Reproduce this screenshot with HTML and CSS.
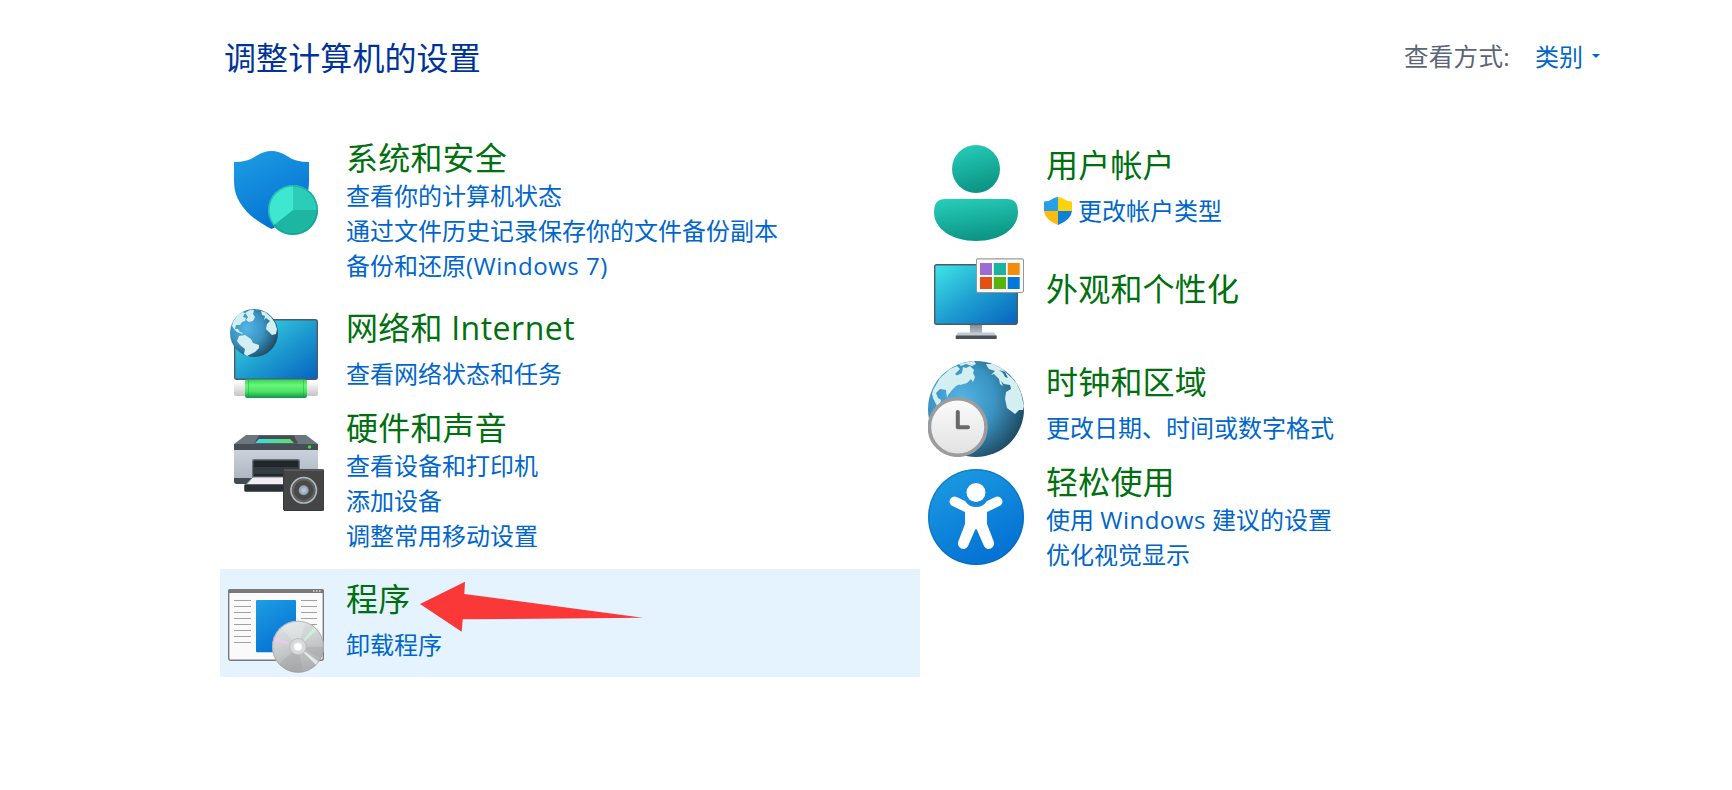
FILE: index.html
```html
<!DOCTYPE html>
<html lang="zh-CN">
<head>
  <meta charset="UTF-8" />
  <title>控制面板</title>
  <link rel="stylesheet" href="styles.css">
</head>
<body>
  <!-- shared gradients -->
  <svg class="defs" width="0" height="0">
    <defs>
      <linearGradient id="blue" x1="0" y1="0" x2="0.5" y2="1"><stop offset="0" stop-color="#1f9ee3"/><stop offset="1" stop-color="#0473d4"/></linearGradient>
      <linearGradient id="screen" x1="0" y1="0" x2="1" y2="1"><stop offset="0" stop-color="#40e6e8"/><stop offset="0.5" stop-color="#1f9fd0"/><stop offset="1" stop-color="#0563c0"/></linearGradient>
      <linearGradient id="teal" x1="0" y1="0" x2="0.3" y2="1"><stop offset="0" stop-color="#27d0bc"/><stop offset="1" stop-color="#0d9686"/></linearGradient>
      <radialGradient id="ocean" cx="0.35" cy="0.4" r="0.7"><stop offset="0" stop-color="#55b4e4"/><stop offset="0.5" stop-color="#3a93c2"/><stop offset="1" stop-color="#1c465d"/></radialGradient>
      <linearGradient id="silver" x1="0" y1="0" x2="0" y2="1"><stop offset="0" stop-color="#fdfdfd"/><stop offset="1" stop-color="#c4c4c4"/></linearGradient>
      <linearGradient id="green" x1="0" y1="0" x2="0" y2="1"><stop offset="0" stop-color="#38d355"/><stop offset="0.3" stop-color="#68f57a"/><stop offset="0.65" stop-color="#4be465"/><stop offset="1" stop-color="#139345"/></linearGradient>
      <linearGradient id="body" x1="0" y1="0" x2="0" y2="1"><stop offset="0" stop-color="#cbd2dc"/><stop offset="1" stop-color="#a8b1bd"/></linearGradient>
      <linearGradient id="glass" x1="0" y1="0" x2="1" y2="0"><stop offset="0" stop-color="#3cd9ed"/><stop offset="1" stop-color="#5ce05a"/></linearGradient>
      <linearGradient id="disc" x1="0" y1="0" x2="0.3" y2="1"><stop offset="0" stop-color="#e4e8e8"/><stop offset="0.5" stop-color="#cdd0d1"/><stop offset="1" stop-color="#aeb0b1"/></linearGradient>
      <radialGradient id="cone"><stop offset="0" stop-color="#c5d0db"/><stop offset="1" stop-color="#8d99a6"/></radialGradient>
    </defs>
  </svg>

  <div class="header">
    <h1>调整计算机的设置</h1>
    <div class="view">
      <span class="view-label">查看方式:</span>
      <a class="view-value">类别</a>
      <span class="caret"></span>
    </div>
  </div>

  <div class="columns">
    <div class="column">
      <div class="category tall">
        <svg class="icon" viewBox="0 0 96 96">
          <path fill="url(#blue)" d="M6 17Q20 17 28 11Q36 6 43.500 6Q51 6 59 11Q67 17 81 17V37C81 60 64 75 43.500 84C23 74 6 58 6 37Z"/>
          <circle cx="65" cy="65" r="25" fill="#3de7d0"/>
          <path fill="#2bcdb8" d="M65 65V40A25 25 0 0 1 90 65Z"/>
          <path fill="#1db6a3" d="M65 65H90A25 25 0 0 1 45.500 80.500Z"/>
          <circle cx="65" cy="65" r="24.200" fill="none" stroke="#138e83" stroke-opacity=".45" stroke-width="1.600"/>
        </svg>
        <div class="text">
          <a class="title">系统和安全</a>
          <a class="link">查看你的计算机状态</a>
          <a class="link">通过文件历史记录保存你的文件备份副本</a>
          <a class="link">备份和还原<span class="en">(Windows 7)</span></a>
        </div>
      </div>

      <div class="category network">
        <svg class="icon" viewBox="0 0 96 96">
          <rect x="6.700" y="10.700" width="82.600" height="59.600" rx="2" fill="url(#screen)" stroke="#4d5b66" stroke-width="1.400"/>
          <rect x="6" y="73" width="84" height="14" rx="2" fill="url(#silver)"/>
          <rect x="17" y="70.500" width="62" height="18.500" rx="2" fill="url(#green)"/>
          <path stroke="#128f3d" stroke-opacity=".35" d="M20.500 71V88M75.500 71V88"/>
          <circle cx="26" cy="24" r="24" fill="url(#ocean)"/>
          <path fill="#d3eff1" d="M5 13L9 7L14 3L17 4L15 8L18 9L17 12L14 13L12 16L8 16L7 20L10 20L12 23L15 24L14 25L9 23L6 20L4 17ZM17 4L22 1L26 1L25 5L27 8L25 12L21 13L18 11L20 8ZM11 27L17 26L23 30L25 34L31 36L31 39L27 43L23 45L19 47L16 45L17 40L12 36L9 32ZM33 2L37 3L43 8L47 14L49 20L48 25L44 26L41 23L38 20L39 15L42 12L38 9L36 11L37 7L34 6Z"/>
        </svg>
        <div class="text">
          <a class="title">网络和 <span class="en">Internet</span></a>
          <a class="link">查看网络状态和任务</a>
        </div>
      </div>

      <div class="category tall">
        <svg class="icon" viewBox="0 0 96 96">
          <path fill="url(#body)" d="M6 34H90V66Q90 69 87 69H9Q6 69 6 66Z"/>
          <path fill="#454b53" d="M6 63H25V69H9Q6 69 6 66Z"/>
          <path fill="#6d757e" d="M18 20H78L90 29H6Z"/>
          <path fill="#464d55" d="M6 29H90V35H6ZM31 20.500H66L70 28.500H26Z"/>
          <path fill="url(#glass)" d="M31 24H62L66 28H27Z"/>
          <circle cx="81.500" cy="32" r="1.700" fill="#22f02f"/>
          <rect x="24.700" y="44.700" width="46.600" height="20" rx="1.500" fill="#202629" stroke="#6a7179" stroke-width="1.400"/>
          <path fill="#353c41" d="M26 52H71V59H26Z"/>
          <path fill="#f1edf2" stroke="#777f86" d="M25 62H60V69.500H18Z"/>
          <rect x="16.500" y="69.500" width="42" height="7" rx="1" fill="#292f33" stroke="#59616a"/>
          <rect x="55.500" y="54.500" width="40.500" height="41" rx="1.500" fill="#454545" stroke="#35393e"/>
          <path stroke="#6a7179" d="M56 55H95.500"/>
          <circle cx="75.700" cy="75.300" r="12.700" fill="#494949" stroke="#adbbc4" stroke-width="1.700"/>
          <circle cx="75.700" cy="75.300" r="10.700" fill="none" stroke="#656565" stroke-width="1.500"/>
          <circle cx="75.700" cy="75.300" r="5" fill="url(#cone)"/>
        </svg>
        <div class="text">
          <a class="title">硬件和声音</a>
          <a class="link">查看设备和打印机</a>
          <a class="link">添加设备</a>
          <a class="link">调整常用移动设置</a>
        </div>
      </div>

      <div class="category active">
        <svg class="icon" viewBox="0 0 96 96">
          <rect x=".7" y="10.700" width="94.600" height="70.600" rx="2" fill="#fafafa" stroke="#797979" stroke-width="1.400"/>
          <path fill="#797979" d="M0 14V12Q0 10 2 10H94Q96 10 96 12V14Z"/>
          <path stroke="#ddd" stroke-dasharray="1.500 1.500" stroke-width="1.500" d="M85 12H93"/>
          <path stroke="#a2a2a2" d="M6 21.500H23M6 27.500H23M6 33.500H23M6 39.500H23M6 45.500H23M6 51.500H23M6 57.500H23M6 63.500H23M73 21.500H89M73 27.500H89M73 33.500H89M73 39.500H89M73 45.500H89"/>
          <rect x="28" y="21" width="40" height="52.300" rx="1" fill="url(#blue)"/>
          <circle cx="70" cy="67.700" r="26" fill="url(#disc)"/>
          <path fill="#eef0f0" opacity=".35" d="M70 67.700L53 48A26 26 0 0 1 78 43Z"/>
          <path fill="#f4f4f4" opacity=".8" d="M70 67.700L88 86L91 83Z"/>
          <path fill="#999" opacity=".3" d="M70 67.700L96 67.700A26 26 0 0 1 93 79ZM70 67.700L51 85A26 26 0 0 0 75 93Z"/>
          <path fill="#f2c5ef" d="M70 67.700L46 57.500L45 61.500Z"/>
          <path fill="#c9f0d8" d="M70 67.700L86 48L89 51Z"/>
          <circle cx="70" cy="67.700" r="25.500" fill="none" stroke="#9c9f9f" stroke-opacity=".65"/>
          <circle cx="70" cy="67.700" r="8.300" fill="#d7dada" stroke="#aeb1b1" stroke-width=".7"/>
          <circle cx="70" cy="67.700" r="4" fill="#fff" stroke="#eceeee"/>
        </svg>
        <div class="text">
          <a class="title">程序</a>
          <a class="link">卸载程序</a>
        </div>
        <svg class="pointer" viewBox="0 0 224 52">
          <path fill="#fb3838" d="M0 23L45 .7L44.300 13L223 36.700L42.700 38.300L41.700 50.700Z"/>
        </svg>
      </div>
    </div>

    <div class="column">
      <div class="category">
        <svg class="icon" viewBox="0 0 96 96">
          <circle cx="48" cy="24" r="24" fill="url(#teal)"/>
          <path fill="url(#teal)" d="M17 54H79Q90 54 90 67C90 84 72 96 48 96S6 84 6 67Q6 54 17 54Z"/>
        </svg>
        <div class="text">
          <a class="title">用户帐户</a>
          <a class="link with-shield">
            <svg class="shield" viewBox="0 0 28 28">
              <path fill="#27a0e6" d="M14 0Q10 0 7.500 2.500Q5 4.500 0 4.500V14H14Z"/>
              <path fill="#ffd10a" d="M14 0Q18 0 20.500 2.500Q23 4.500 28 4.500V14H14Z"/>
              <path fill="#fdbc0b" d="M0 14H14V28Q1 23 0 14Z"/>
              <path fill="#0f80d8" d="M28 14H14V28Q27 23 28 14Z"/>
            </svg>更改帐户类型</a>
        </div>
      </div>

      <div class="category single">
        <svg class="icon" viewBox="0 0 96 96">
          <linearGradient id="neck" x1="0" y1="0" x2="0" y2="1"><stop offset="0" stop-color="#7f8b95"/><stop offset="1" stop-color="#b3bdc6"/></linearGradient>
          <rect x="42" y="73" width="12" height="8" fill="url(#neck)"/>
          <path fill="#c1cad2" d="M30 80.500H66L68.700 84H27.700Z"/>
          <rect x="27.700" y="83.500" width="41" height="3.500" rx=".5" fill="#4b5157"/>
          <rect x="6.700" y="12.700" width="82.600" height="59.600" rx="2" fill="url(#screen)" stroke="#4d5b66" stroke-width="1.400"/>
          <rect x="48.500" y="6.500" width="47" height="34" rx="1.500" fill="#fafafa" stroke="#989898"/>
          <path stroke="#bdbdbd" stroke-width="1.500" d="M49 7H95"/>
          <rect x="52" y="11" width="12" height="12" fill="#9b6dd3"/>
          <rect x="65.800" y="11" width="12.200" height="12" fill="#1bb3a0"/>
          <rect x="79.700" y="11" width="12" height="12" fill="#f18c0c"/>
          <rect x="52" y="25" width="12" height="12" fill="#e25012"/>
          <rect x="65.800" y="25" width="12.200" height="12" fill="#56b40d"/>
          <rect x="79.700" y="25" width="12" height="12" fill="#0478d7"/>
        </svg>
        <div class="text">
          <a class="title">外观和个性化</a>
        </div>
      </div>

      <div class="category clock">
        <svg class="icon" viewBox="0 0 96 96">
          <circle cx="48" cy="48" r="48" fill="url(#ocean)"/>
          <path fill="#d3eff1" d="M5 29L12 17L22 8L29 5L32 8L27 13L31 16L29 19L34 22L28 25L24 29L20 34L19 37L18 29L12 28L8 32L10 37L13 39L12 43L9 45L5 37L4 33ZM28 15L34 12L35 6L38 7L42 5L46 9L45 12L47 16L45 21L43 18L39 22L32 24L27 21L30 18ZM31 3L40 1L46 0L48 3L44 5L38 3L33 5ZM58 3L65 3L73 7L84 17L89 23L93 32L96 45L95 49L91 49L87 53L83 50L79 47L77 38L78 31L83 28L82 24L76 23L73 20L75 25L72 23L71 18L66 13L63 14L67 10L61 8L59 5ZM71 9L75 12L77 16L80 17L77 11Z"/>
          <circle cx="29.700" cy="66" r="28.300" fill="url(#silver)"/>
          <circle cx="29.700" cy="66" r="28.300" fill="#fafafa" fill-opacity=".55" stroke="#9b9c9d" stroke-width="3.600"/>
          <path fill="none" stroke="#686868" stroke-width="4" stroke-linecap="round" stroke-linejoin="round" d="M29.800 51V66.200H40"/>
        </svg>
        <div class="text">
          <a class="title">时钟和区域</a>
          <a class="link">更改日期、时间或数字格式</a>
        </div>
      </div>

      <div class="category tall">
        <svg class="icon" viewBox="0 0 96 96">
          <circle cx="48" cy="48" r="48" fill="url(#blue)"/>
          <circle cx="48" cy="48" r="47.300" fill="none" stroke="#07579c" stroke-opacity=".35" stroke-width="1.400"/>
          <circle cx="48" cy="23.500" r="9.500" fill="#fff"/>
          <path fill="#fff" d="M28.500 28L37 32Q41 38 48 38T59 32L67.500 28A4.800 4.800 0 0 1 71.500 37L59 43V55L65.500 72A5 5 0 0 1 56 77L49 61Q48 59 47 61L40 77A5 5 0 0 1 30.500 72L37 55V43L24.500 37A4.800 4.800 0 0 1 28.500 28Z"/>
        </svg>
        <div class="text">
          <a class="title">轻松使用</a>
          <a class="link">使用 <span class="en">Windows</span> 建议的设置</a>
          <a class="link">优化视觉显示</a>
        </div>
      </div>
    </div>
  </div>
</body>
</html>
```

FILE: styles.css
```css
body {
  margin: 0;
  background: #fff;
  font-family: "Open Sans", "Noto Sans CJK SC", sans-serif;
  font-size: 24px;
  color: #0066cc;
}
.defs {
  display: block;
}
.header {
  display: flex;
  justify-content: space-between;
  align-items: center;
  height: 60px;
  padding: 28px 132px 0 224px;
}
h1 {
  margin: 0;
  font-size: 32px;
  font-weight: normal;
  line-height: 40px;
  letter-spacing: 0.1px;
  color: #003399;
}
.view {
  display: flex;
  align-items: center;
  line-height: 35px;
  margin-top: -4px;
}
.view-label {
  width: 131px;
  font-size: 24.5px;
  letter-spacing: 0.3px;
  color: #5a6577;
}
.caret {
  margin-left: 9px;
  border: 4px solid transparent;
  border-top-color: #0066cc;
  border-bottom: 0;
}
.columns {
  display: grid;
  grid-template-columns: 700px 700px;
  align-items: start;
  padding: 47px 0 0 220px;
}
.category {
  display: flex;
  gap: 22px;
  box-sizing: border-box;
  height: 107px;
  padding: 10px 0 0 8px;
}
.category.tall {
  height: 164px;
}
.category.network {
  height: 106px;
}
.category.single {
  height: 109px;
}
.category.clock {
  height: 108px;
}
.category.active {
  position: relative;
  height: 108px;
  background: #e5f3ff;
}
.icon {
  width: 96px;
  height: 96px;
  flex: none;
}
.text {
  display: flex;
  flex-direction: column;
}
.title {
  margin-bottom: 8px;
  font-size: 32px;
  line-height: 40px;
  letter-spacing: 0.2px;
  color: #00700f;
}
.link {
  line-height: 35px;
  white-space: nowrap;
}
.en {
  letter-spacing: 0.5px;
}
.tall .text {
  margin-top: -7px;
}
.tall .title {
  margin-bottom: 0;
}
.network .text {
  margin-top: -1px;
}
.clock .text {
  margin-top: 1px;
}
.single .title {
  margin-top: 17px;
}
.with-shield {
  display: flex;
  align-items: center;
  gap: 6px;
  margin-left: -2px;
}
.shield {
  width: 28px;
  height: 28px;
}
.pointer {
  position: absolute;
  left: 200px;
  top: 12px;
  width: 224px;
  height: 52px;
}
```
